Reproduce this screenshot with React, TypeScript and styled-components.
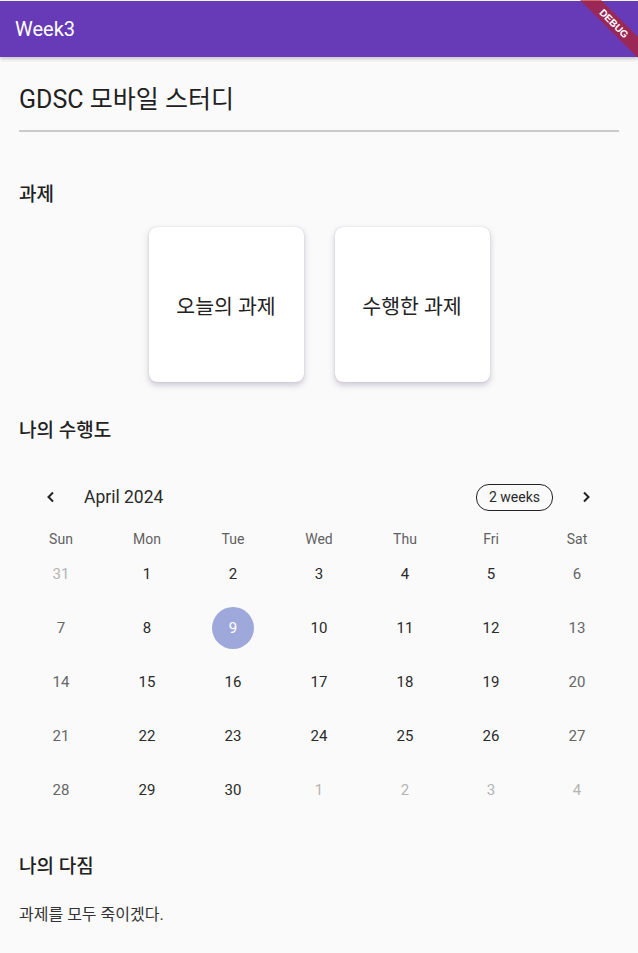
import React, { FunctionComponent } from 'react'
import styled, { createGlobalStyle } from 'styled-components'

const Global = createGlobalStyle`
    html, body {
        margin: 0;
        padding: 0;
        background: #fafafa;
        font-family: Roboto, "Noto Sans CJK KR", sans-serif;
        color: #212121;
    }
`

const S = {
    Page: styled.div`
        width: 638px;
        min-height: 953px;
        background: #fafafa;
        position: relative;
        overflow: hidden;
    `,
    AppBar: styled.header`
        height: 56px;
        margin-top: 1px;
        background: #673ab7;
        display: flex;
        align-items: center;
        padding-left: 15px;
        box-shadow: 0 2px 4px rgba(0, 0, 0, 0.22);
        position: relative;
        z-index: 1;
    `,
    AppTitle: styled.div`
        color: #fff;
        font-size: 20px;
        font-weight: 400;
    `,
    Banner: styled.div`
        position: absolute;
        top: 16px;
        right: -26px;
        width: 100px;
        height: 15px;
        background: rgba(183, 28, 28, 0.63);
        transform: rotate(45deg);
        color: #fff;
        font-family: "Liberation Sans", sans-serif;
        font-size: 10px;
        font-weight: bold;
        line-height: 15px;
        text-align: center;
        z-index: 2;
    `,
    Content: styled.main`
        padding: 0 19px;
        display: flex;
        flex-direction: column;
    `,
    Title: styled.h1`
        margin: 27px 0 0;
        font-size: 25px;
        font-weight: 400;
        line-height: 32px;
        color: #212121;
    `,
    Divider: styled.hr`
        margin: 14px 0 0;
        border: none;
        height: 2px;
        background: #c9c9c9;
    `,
    Heading: styled.h2<{ top: number }>`
        margin: ${props => props.top}px 0 0;
        font-size: 19px;
        font-weight: 500;
        line-height: 26px;
        color: #212121;
    `,
    Cards: styled.div`
        display: flex;
        justify-content: center;
        gap: 31px;
        margin-top: 19px;
    `,
    Card: styled.div`
        width: 155px;
        height: 155px;
        background: #fff;
        border-radius: 8px;
        box-shadow: 0 3px 6px rgba(60, 40, 90, 0.25), 0 0 1px rgba(60, 40, 120, 0.3);
        display: flex;
        align-items: center;
        justify-content: center;
        font-size: 20.5px;
        color: #222;
    `,
    Calendar: styled.section`
        margin: 33px -1px 0;
        display: flex;
        flex-direction: column;
    `,
    CalHeader: styled.div`
        height: 40px;
        display: flex;
        align-items: center;
        padding: 0 27px 0 26px;
    `,
    Chevron: styled.div`
        width: 14px;
        height: 14px;
        display: flex;
        align-items: center;
        justify-content: center;
        color: #222;
    `,
    Month: styled.div`
        margin-left: 26px;
        flex: 1;
        font-size: 17.5px;
        color: #2a2a2a;
    `,
    FormatButton: styled.div`
        height: 25px;
        padding: 0 12px;
        margin-right: 26px;
        border: 1.3px solid #222;
        border-radius: 13px;
        display: flex;
        align-items: center;
        font-size: 14px;
        color: #2a2a2a;
    `,
    Grid: styled.div`
        display: grid;
        grid-template-columns: repeat(7, 1fr);
    `,
    Dow: styled.div`
        height: 16px;
        margin-top: 14px;
        display: flex;
        align-items: center;
        justify-content: center;
        font-size: 14px;
        color: #616161;
    `,
    Cell: styled.div`
        height: 54px;
        display: flex;
        align-items: center;
        justify-content: center;
    `,
    Day: styled.div<{ tone: string; selected?: boolean }>`
        width: 42px;
        height: 42px;
        border-radius: 50%;
        display: flex;
        align-items: center;
        justify-content: center;
        font-size: 15px;
        background: ${props => (props.selected ? '#9fa8da' : 'transparent')};
        color: ${props => props.tone};
    `,
    Body: styled.p`
        margin: 21px 0 0;
        font-size: 16px;
        color: #333;
    `
}

const Left = () => (
    <svg width="14" height="14" viewBox="0 0 14 14">
        <path d="M9 2.5 L4.5 7 L9 11.5" fill="none" stroke="currentColor" strokeWidth="2" />
    </svg>
)

const Right = () => (
    <svg width="14" height="14" viewBox="0 0 14 14">
        <path d="M5 2.5 L9.5 7 L5 11.5" fill="none" stroke="currentColor" strokeWidth="2" />
    </svg>
)

const dows = ['Sun', 'Mon', 'Tue', 'Wed', 'Thu', 'Fri', 'Sat']

const days: { n: number; out?: boolean }[] = [
    { n: 31, out: true },
    ...Array.from({ length: 30 }, (_, i) => ({ n: i + 1 })),
    { n: 1, out: true },
    { n: 2, out: true },
    { n: 3, out: true },
    { n: 4, out: true }
]

const toneFor = (index: number, out?: boolean) => {
    if (out) return '#b4b4b4'
    const col = index % 7
    if (col === 0 || col === 6) return '#666'
    return '#2a2a2a'
}

const App: FunctionComponent = () => {
    return <S.Page>
        <Global />
        <S.AppBar>
            <S.AppTitle>Week3</S.AppTitle>
        </S.AppBar>
        <S.Banner>DEBUG</S.Banner>
        <S.Content>
            <S.Title>GDSC 모바일 스터디</S.Title>
            <S.Divider />
            <S.Heading top={50}>과제</S.Heading>
            <S.Cards>
                <S.Card>오늘의 과제</S.Card>
                <S.Card>수행한 과제</S.Card>
            </S.Cards>
            <S.Heading top={36}>나의 수행도</S.Heading>
            <S.Calendar>
                <S.CalHeader>
                    <S.Chevron><Left /></S.Chevron>
                    <S.Month>April 2024</S.Month>
                    <S.FormatButton>2 weeks</S.FormatButton>
                    <S.Chevron><Right /></S.Chevron>
                </S.CalHeader>
                <S.Grid>
                    {dows.map(d => <S.Dow key={d}>{d}</S.Dow>)}
                    {days.map((d, i) => (
                        <S.Cell key={i}>
                            <S.Day tone={i === 9 ? '#fff' : toneFor(i, d.out)} selected={i === 9}>
                                {d.n}
                            </S.Day>
                        </S.Cell>
                    ))}
                </S.Grid>
            </S.Calendar>
            <S.Heading top={37}>나의 다짐</S.Heading>
            <S.Body>과제를 모두 죽이겠다.</S.Body>
        </S.Content>
    </S.Page>
}

export default App
